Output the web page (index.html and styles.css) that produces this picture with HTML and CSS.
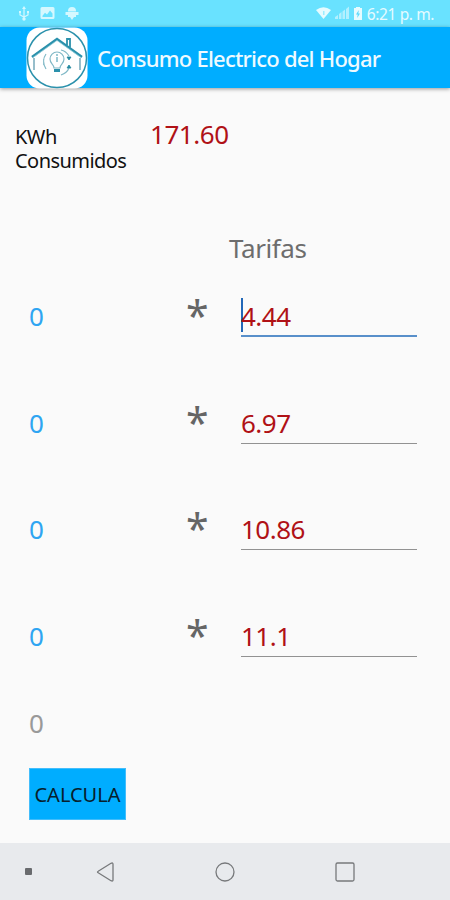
FILE: index.html
```html
<!DOCTYPE html>
<html lang="es">
<head>
<meta charset="utf-8">
<title>Consumo Electrico del Hogar</title>
<link rel="stylesheet" href="styles.css">
</head>
<body>
<header class="status">
  <svg class="status-left" width="62" height="16" viewBox="0 0 62 16" fill="none" stroke="#d5f8ff" stroke-width="1.2">
    <path d="M6 2v11M2 6v3l4 2 4-2V6"/>
    <path d="M6 0l2 3H4z" fill="#d5f8ff" stroke="none"/>
    <circle cx="6" cy="13" r="1.7" fill="#d5f8ff" stroke="none"/>
    <path d="M1 5h2v2H1zM9 5h2v2H9z" fill="#d5f8ff" stroke="none"/>
    <path d="M24 1h11a1.500 1.500 0 0 1 1.500 1.500v9A1.500 1.500 0 0 1 35 13H24a1.500 1.500 0 0 1-1.500-1.500v-9A1.500 1.500 0 0 1 24 1zM24.500 11h10V7.500l-2.500-3-3 4-2-1.700-2.500 3z" fill="#d5f8ff" fill-rule="evenodd" stroke="none"/>
    <path d="M50 5a4 4 0 0 1 8 0v1h2.500v3H58v2h-2l-2 3-2-3h-2V9h-2.500V6H50z" fill="#d5f8ff" stroke="none"/>
    <path d="M50 5.500h8" stroke="#8ae9ff" stroke-width=".8"/>
  </svg>
  <div class="status-right">
    <svg width="48" height="16" viewBox="0 0 48 16" fill="#e6fbff">
      <path d="M0 4q7.500-5.500 15 0L7.500 13z"/>
      <path d="M7 5h1.500v4H7z" fill="#9cecff"/>
      <path d="M19 13v-2l3-2v4zM23 13V8l2.500-2v7zM26.500 13V5.500L29 3.500V13zM30 13V3l3-2.500V13z" fill="#b2f0ff"/>
      <path d="M40 1h4v1h2v12h-8V2h2z"/>
      <path d="M42.800 4L40 8.500h1.700L41.200 12 44 7.500h-1.700z" fill="#58d9fb"/>
    </svg>
    <span class="clock">6:21 p. m.</span>
  </div>
</header>
<div class="appbar">
  <svg class="logo" width="62" height="62" viewBox="0 0 62 62" fill="none">
    <rect x=".5" y=".5" width="61" height="61" rx="13" fill="#fff"/>
    <circle cx="31" cy="31" r="29.500" stroke="#2b91ac" stroke-width="1.500"/>
    <path d="M6 30L31 12l25 18" stroke="#2b91ac" stroke-width="2.600"/>
    <path d="M7 30.500L31 13.500l24 17" stroke="#a5d8e3" stroke-width=".7"/>
    <path d="M41 18v-6h3v8.500" stroke="#2b91ac" stroke-width="1.800"/>
    <path d="M8 31v12M54 31v12" stroke="#75a9bb" stroke-width="1.500"/>
    <path d="M28 41c0-4-4-4-4-9a7 7 0 0 1 14 0c0 5-4 5-4 9z" stroke="#80b8c6" stroke-width="1.200"/>
    <path d="M28 42h6v3h-6z" fill="#2b91ac"/>
    <path d="M31 30v5M31 27v2" stroke="#5da8ba" stroke-width="1.200"/>
    <path d="M20 27q-5 7 0 15M35 23q5 1 8 6M43 41q-2 5-8 7" stroke="#7fb8c6" stroke-width="1.200"/>
    <path d="M41 30h4l-2 3zM41 41h4l-2-3z" fill="#25899f" stroke="#25899f" stroke-width=".8"/>
    <path d="M17.500 32v6" stroke="#8fc0cc"/>
  </svg>
  <h1>Consumo Electrico del Hogar</h1>
</div>
<main>
  <section class="usage">
    <div class="usage-label">KWh Consumidos</div>
    <div class="usage-value">171.60</div>
  </section>
  <h2>Tarifas</h2>
  <div class="row"><span class="qty">0</span><span class="times">*</span><div class="field active">4.44</div></div>
  <div class="row"><span class="qty">0</span><span class="times">*</span><div class="field">6.97</div></div>
  <div class="row"><span class="qty">0</span><span class="times">*</span><div class="field">10.86</div></div>
  <div class="row"><span class="qty">0</span><span class="times">*</span><div class="field">11.1</div></div>
  <div class="total">0</div>
  <button type="button">CALCULA</button>
</main>
<nav>
  <span class="dot"></span>
  <svg class="back" width="20" height="22" viewBox="0 0 20 22"><path d="M2.200 10.200L15 2.300q2-1 2 1v15.400q0 2-2 1L2.200 11.800q-1.400-.8 0-1.600z"/></svg>
  <svg class="home" width="22" height="22" viewBox="0 0 22 22"><circle cx="11" cy="11" r="9"/></svg>
  <svg class="recent" width="22" height="22" viewBox="0 0 22 22"><rect x="2" y="2" width="18" height="18" rx="1.500"/></svg>
</nav>
</body>
</html>
```
FILE: styles.css
```css
* { box-sizing: border-box; }
body {
  margin: 0;
  width: 450px;
  height: 900px;
  display: flex;
  flex-direction: column;
  overflow: hidden;
  background: #fafafa;
  font-family: "Noto Sans", sans-serif;
}
.status {
  height: 27px;
  flex: none;
  display: flex;
  justify-content: space-between;
  align-items: center;
  padding: 1px 16px 0 18px;
  background: #69e2ff;
}
.status-right { display: flex; align-items: center; gap: 3px; }
.clock {
  color: #e6fbff;
  font-size: 15.5px;
  line-height: 27px;
  letter-spacing: -0.4px;
  white-space: nowrap;
}
.appbar {
  height: 61px;
  flex: none;
  display: flex;
  align-items: center;
  gap: 9px;
  padding-left: 26px;
  background: #00adff;
  box-shadow: 0 1px 4px rgba(0, 0, 0, .4);
}
.logo { flex: none; }
h1 {
  margin: 0;
  color: #eefaff;
  font-size: 22px;
  line-height: 30px;
  font-weight: 500;
  letter-spacing: -0.78px;
  white-space: nowrap;
}
main { flex: 1; display: flex; flex-direction: column; align-items: flex-start; }
.usage { display: flex; height: 141px; padding: 27px 0 0 15px; }
.usage-label {
  width: 135px;
  padding-top: 10px;
  color: #111;
  font-size: 20px;
  line-height: 24px;
  letter-spacing: -0.55px;
}
.usage-value {
  color: #b01116;
  font-size: 26px;
  line-height: 39px;
  letter-spacing: -0.45px;
}
h2 {
  margin: 0 0 0 229px;
  height: 34px;
  color: #6d6d6d;
  font-size: 26px;
  line-height: 38px;
  font-weight: 400;
  letter-spacing: -0.4px;
}
.row {
  width: 100%;
  height: 106.5px;
  flex: none;
  display: grid;
  grid-template-columns: 157px 55px 176px;
  align-items: center;
  padding-left: 29px;
}
.qty { color: #2ea5f2; font-size: 26px; line-height: 42px; }
.times {
  height: 42px;
  color: #656565;
  font-size: 41px;
  line-height: 40px;
}
.field {
  height: 42px;
  color: #b01116;
  font-size: 26px;
  line-height: 42px;
  letter-spacing: -0.5px;
  border-bottom: 1px solid #929292;
}
.active {
  border-bottom: 2px solid #588fca;
  background: linear-gradient(#2268b8, #2268b8) 0 3px / 2px 34px no-repeat;
}
.total {
  margin-left: 29px;
  height: 79px;
  color: #999;
  font-size: 26px;
  line-height: 69px;
}
button {
  width: 97px;
  height: 52px;
  margin: 0 0 0 29px;
  padding: 0;
  border: 1px solid #43bdfb;
  background: #00adff;
  color: #07202d;
  font: 20px/52px "Noto Sans", sans-serif;
  white-space: nowrap;
}
nav {
  height: 57px;
  flex: none;
  display: flex;
  align-items: center;
  padding-left: 25px;
  background: #e8eaed;
}
nav svg { fill: none; stroke: #77797b; stroke-width: 1.3; }
.dot { width: 7px; height: 7px; border-radius: 1px; background: #696b6e; }
.back { margin-left: 64px; }
.home { margin-left: 98px; }
.recent { margin-left: 98px; }
```
